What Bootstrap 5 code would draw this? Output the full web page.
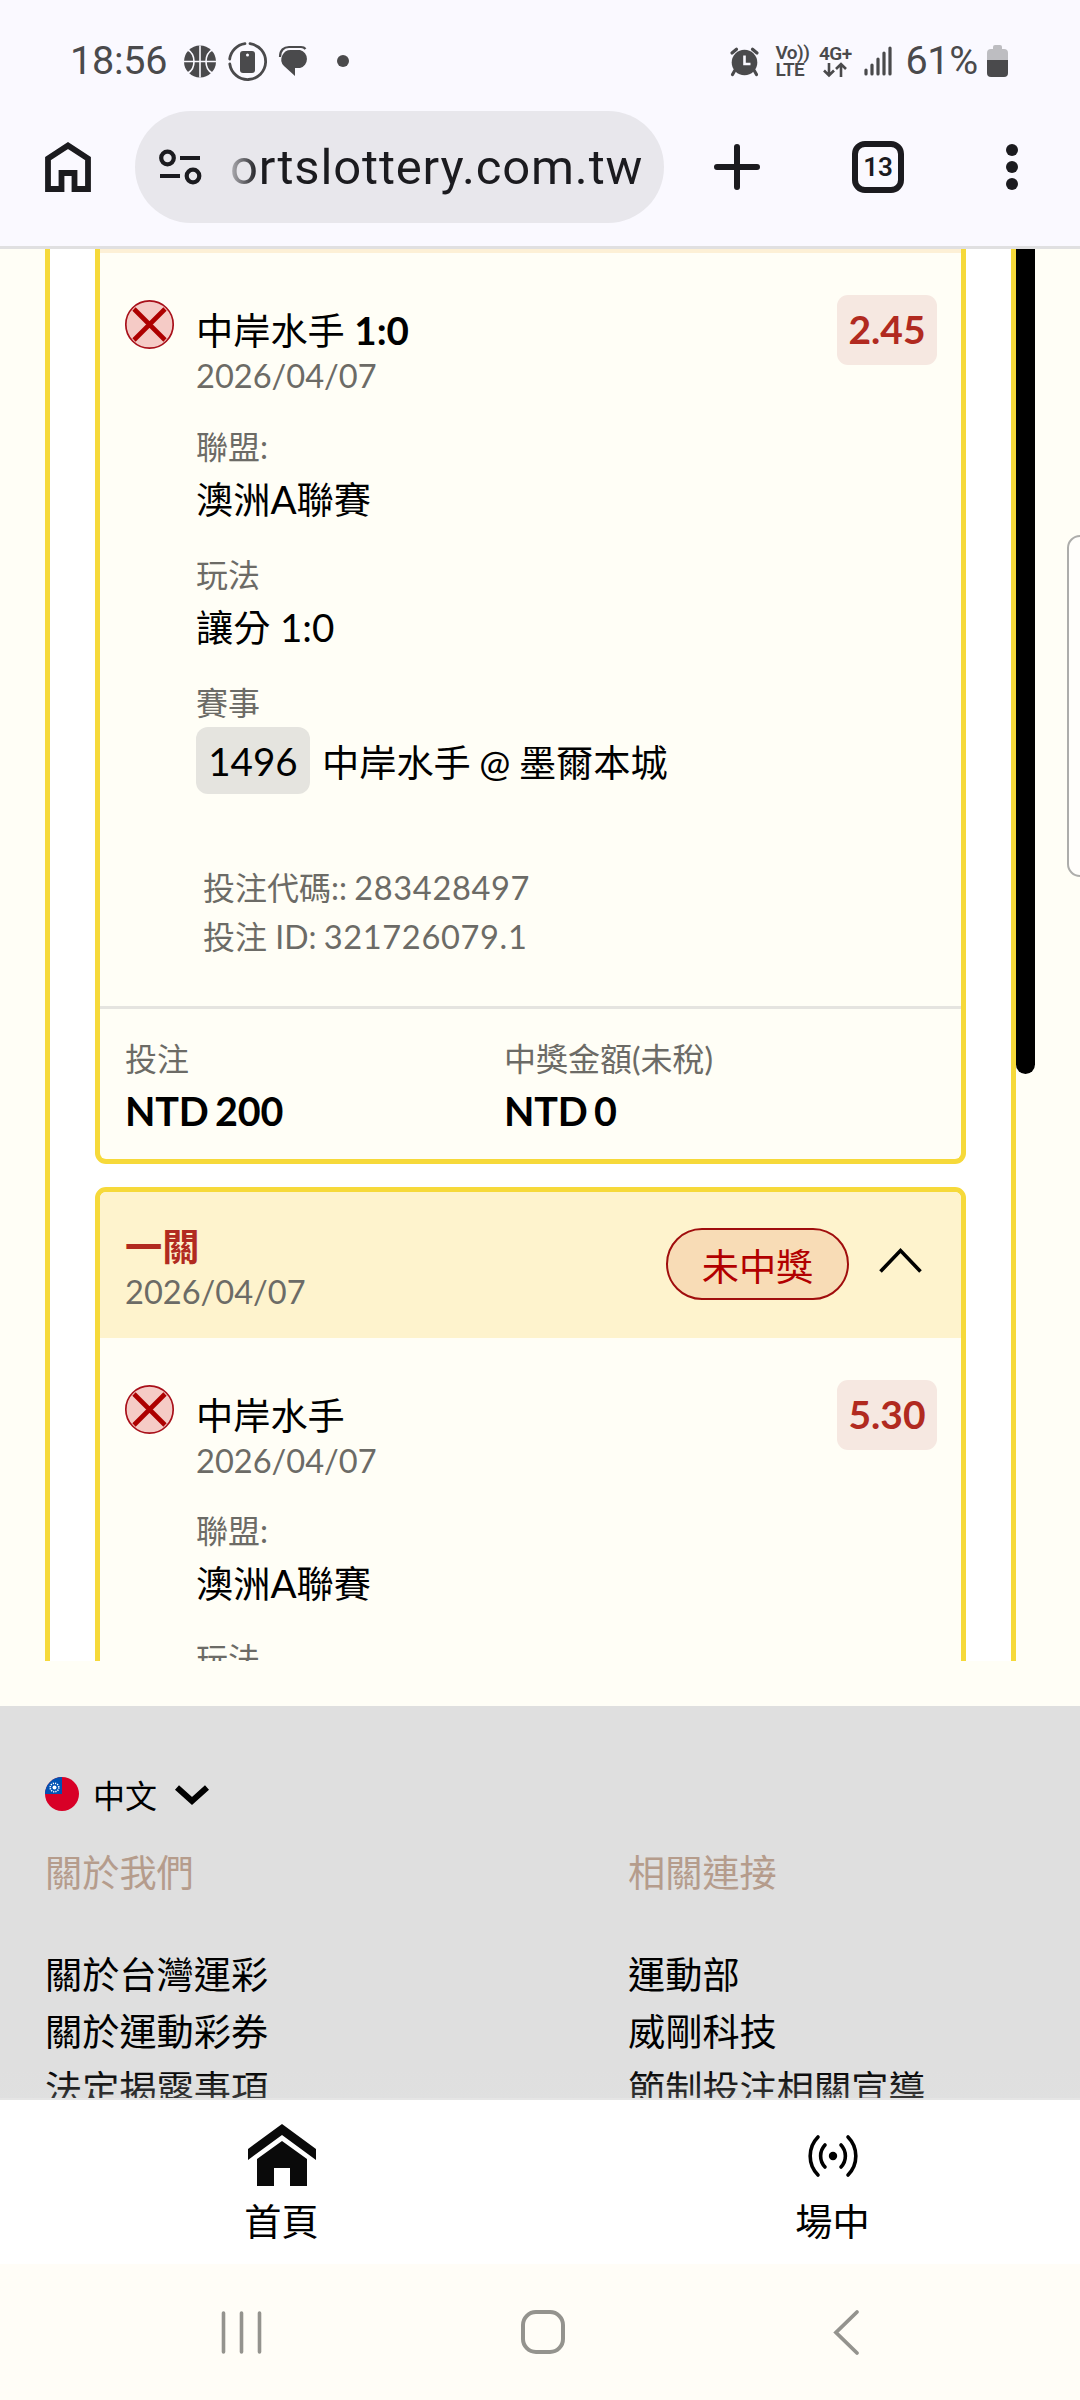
<!DOCTYPE html>
<html lang="zh-Hant">
<head>
<meta charset="utf-8">
<meta name="viewport" content="width=device-width, initial-scale=1">
<title>台灣運彩</title>
<link href="https://cdn.jsdelivr.net/npm/bootstrap@5.3.0/dist/css/bootstrap.min.css" rel="stylesheet">
<style>
  html, body { height: 2400px; }
  body { width: 1080px; margin: 0; overflow: hidden; background: #fffef6; color: #000;
         font-family: Lato, "Noto Sans CJK TC", sans-serif; }
  svg { display: block; flex: none; overflow: visible; }
  .screen { width: 1080px; height: 2400px; overflow: hidden; }
  .chrome { height: 249px; background: #faf9ff; border-bottom: 3px solid #e0e0e1; font-family: Roboto, sans-serif; }
  .status { height: 111px; padding: 11px 69px 0 70px; color: #4a4a4c; }
  .status-num { font-size: 39.5px; line-height: 40px; letter-spacing: -.2px; }
  .net-tag { font-size: 19px; line-height: 17px; font-weight: 600; letter-spacing: -.5px; white-space: nowrap; }
  .toolbar { height: 112px; color: #1b1b1f; padding-left: 45px; }
  .omnibox { width: 529px; height: 112px; background: #e8e7ec; margin-left: 44px; padding-left: 24px; }
  .url { font-size: 49px; line-height: 60px; letter-spacing: .85px; margin-left: 28px; padding-top: 2px; color: #1b1b1f;
         -webkit-mask-image: linear-gradient(90deg, rgba(0,0,0,.25) 0, #000 28px); mask-image: linear-gradient(90deg, rgba(0,0,0,.25) 0, #000 28px); }
  .tabs-box { width: 52px; height: 52px; border: 6px solid #1b1b1f; border-radius: 13px; font-size: 26px; font-weight: 600; line-height: 1; }
  .viewport-area { height: 1412px; padding-left: 45px; }
  .panel { width: 971px; background: #fff; border: solid #f6d93a; border-width: 0 5px; padding: 0 45px; }
  .thumb { width: 19px; height: 825px; background: #000; border-radius: 0 0 10px 10px; }
  .ticket { flex: none; border: 5px solid #f6d93a; border-radius: 11px; background: #fffef6; overflow: hidden; }
  .ticket-cut { border-top: 0; border-radius: 0 0 11px 11px; }
  .ticket + .ticket { margin-top: 23px; }
  .ticket-strip { height: 4px; background: #fdf0d6; }
  .ticket-head { height: 146px; background: #fef3cd; padding: 32px 39px 0 25px; }
  .t37 { font-size: 37.2px; line-height: 46px; white-space: nowrap; }
  .t32 { font-size: 32px; line-height: 40px; white-space: nowrap; }
  .latin { font-size: 38.6px; line-height: 1; }
  .amount { font-size: 39.5px; letter-spacing: -.2px; word-spacing: -3px; margin-top: 9px; }
  .dim { color: #6c6b66; }
  .date { font-size: 32.6px; margin-top: 2px; }
  .brick { color: #b12a20; }
  .pill { width: 183px; height: 72px; border: 2px solid #a00d0d; background: #f8dcb6; color: #b20000; padding-top: 6px; }
  .leg { padding: 55px 24px 0 25px; }
  .leg-icon { margin-top: -8px; }
  .leg-text { margin-left: 22px; }
  .odds { width: 100px; height: 70px; margin-top: -13px; border-radius: 11px; background: #f6e8e1; font-weight: 700; font-size: 39px; padding-bottom: 2px; }
  .field-a { margin-top: 31px; }
  .field-b { margin-top: 32px; }
  .gap-val { margin-top: 10px; }
  .code { width: 114px; height: 67px; border-radius: 12px; background: #e5e4df; margin-right: 12px; font-size: 38.6px; }
  .ids { margin: 74px 0 0 7px; padding-bottom: 49px; }
  .ids .latin { font-size: 32.6px; letter-spacing: .65px; margin-left: -1px; }
  .totals { border-top: 3px solid #e5e4e0; padding: 30px 25px 24px; height: 153px; }
  .footer-gap { height: 45px; background: #fffef6; }
  .site-footer { height: 394px; background: #dfdfdf; padding: 64px 45px 0; overflow: hidden; position: relative; }
  .foot-title { color: #b59c8c; }
  .foot-col { width: 583px; flex: none; }
  .foot-col .t37 { line-height: 57px; }
  .fade-edge { left: 0; right: 0; bottom: 0; height: 32px; background: linear-gradient(rgba(226,226,226,0), rgba(226,226,226,.25)); border-bottom: 2px solid #e5e5e5; }
  .tabbar { height: 164px; background: #fff; padding: 24px 0 0 6px; }
  .tab-item { width: 551px; flex: none; }
  .sysnav { height: 136px; background: #fffdf7; padding: 0 221px 0 221px; color: #94938e; }
  .edge-handle { position: absolute; left: 1067px; top: 535px; width: 26px; height: 342px; border: 2px solid #adadab; border-radius: 14px; background: #fffefb; }
</style>
</head>
<body>
<div class="screen d-flex flex-column position-relative">

  <header class="chrome flex-shrink-0">
    <div class="status d-flex align-items-center">
      <span class="status-num">18:56</span>
      <svg style="margin-left:17px" width="32" height="33" viewBox="0 0 32 32"><circle cx="16" cy="16" r="16" fill="currentColor"/><g fill="none" stroke="#faf9ff" stroke-width="1.600"><path d="M16 0v32M0 16h32M4 4.500C12 9 12 23 4 27.500M28 4.500C20 9 20 23 28 27.500"/></g></svg>
      <svg style="margin-left:12px" width="39" height="39" viewBox="0 0 39 39"><g fill="none" stroke="currentColor" stroke-width="2.800"><path d="M22 1.700A18 18 0 1 1 1.800 22" stroke-linecap="round"/><path d="M1.700 17A18 18 0 0 1 17 1.700" stroke-linecap="round"/></g><rect x="12" y="9" width="15" height="22" rx="3" fill="currentColor"/><circle cx="19.500" cy="13" r="1.500" fill="#faf9ff"/></svg>
      <svg style="margin-left:12px" width="31" height="30" viewBox="0 0 31 30"><path d="M1 11C1 4 5 1 10 1H22Q25 1 26.500 3" fill="none" stroke="currentColor" stroke-width="2.200"/><path d="M13 4H21A9.300 9.300 0 0 1 21 22H16V30L5 20A9.500 9.500 0 0 1 13 4Z" fill="currentColor"/></svg>
      <svg style="margin-left:27px" width="12" height="12" viewBox="0 0 12 12"><circle cx="6" cy="6" r="6" fill="currentColor"/></svg>

      <svg style="margin-left:381px" width="29" height="29" viewBox="0 0 29 29"><circle cx="14.500" cy="15.500" r="12.800" fill="currentColor"/><path d="M2 6L6.500 2.200M27 6L22.500 2.200M4.500 24L2.500 27.500M24.500 24L26.500 27.500" stroke="currentColor" stroke-width="3.200" stroke-linecap="round"/><path d="M14.500 8.500V17H20.500" fill="none" stroke="#faf9ff" stroke-width="2.600"/></svg>
      <div class="net-tag" style="margin-left:16px;width:33px"><div>Vo))</div><div>LTE</div></div>
      <div class="net-tag d-flex flex-column align-items-center" style="margin-left:10px;width:34px">4G+<svg width="24" height="14" viewBox="0 0 24 14" style="margin-top:1px"><path d="M6 0V12.500M1 7.500L6 12.500L11 7.500M18 14V1M13 6L18 1L23 6" fill="none" stroke="currentColor" stroke-width="2.600"/></svg></div>
      <svg style="margin-left:12px" width="28" height="30" viewBox="0 0 28 30"><path d="M2 24V28M8 19V28M14 13V28M20 7V28M26 2V28" stroke="currentColor" stroke-width="3.200" stroke-linecap="round"/></svg>
      <span class="status-num" style="margin-left:13px">61%</span>
      <svg style="margin-left:9px" width="21" height="32" viewBox="0 0 21 32"><path d="M6 2Q6 0 8 0H13Q15 0 15 2V4H17Q21 4 21 8V16H0V8Q0 4 4 4H6Z" fill="#bdbdc1"/><path d="M0 15H21V28Q21 32 17 32H4Q0 32 0 28Z" fill="currentColor"/></svg>
    </div>
    <div class="toolbar d-flex align-items-center">
      <svg width="46" height="50" viewBox="0 0 46 50"><path d="M3 47V16.500L23 3.500L43 16.500V47H29.500V31H16.500V47Z" fill="none" stroke="currentColor" stroke-width="5.800"/></svg>
      <div class="omnibox rounded-pill d-flex align-items-center">
        <svg width="43" height="36" viewBox="0 0 43 36"><g fill="none" stroke="currentColor" stroke-width="4.200"><circle cx="8.500" cy="9" r="6.300"/><circle cx="34" cy="27" r="6.300"/><path d="M21 9H41M1 27H21"/></g></svg>
        <span class="url">ortslottery.com.tw</span>
      </div>
      <svg style="margin-left:50px" width="46" height="46" viewBox="0 0 46 46"><path d="M23 3V43M3 23H43" stroke="currentColor" stroke-width="6" stroke-linecap="round"/></svg>
      <div class="tabs-box d-flex align-items-center justify-content-center" style="margin-left:92px">13</div>
      <svg style="margin-left:102px" width="12" height="46" viewBox="0 0 12 46"><g fill="currentColor"><circle cx="6" cy="6" r="6"/><circle cx="6" cy="23" r="6"/><circle cx="6" cy="40" r="6"/></g></svg>
    </div>
  </header>

  <main class="viewport-area flex-shrink-0 overflow-hidden d-flex align-items-start">
    <div class="panel d-flex flex-column">
      <article class="ticket ticket-cut">
        <div class="ticket-strip"></div>
        <div class="leg d-flex align-items-start">
          <svg class="leg-icon" width="49" height="49" viewBox="0 0 49 49"><circle cx="24.500" cy="24.500" r="23.700" fill="#f5cbc6" stroke="#a8101a" stroke-width="1.700"/><path d="M9 9L40 40M40 9L9 40" stroke="#ad0000" stroke-width="4.600"/></svg>
          <div class="leg-text flex-grow-1">
            <div class="t37">中岸水手 <b class="latin">1:0</b></div>
            <div class="t32 date dim">2026/04/07</div>
            <div class="t32 dim field-a">聯盟:</div>
            <div class="t37 gap-val">澳洲<span class="latin">A</span>聯賽</div>
            <div class="t32 dim field-b">玩法</div>
            <div class="t37 gap-val">讓分 <span class="latin">1:0</span></div>
            <div class="t32 dim field-b">賽事</div>
            <div class="d-flex align-items-center" style="margin-top:4px">
              <span class="code t37 d-flex align-items-center justify-content-center">1496</span>
              <span class="t37 pt-1" style="word-spacing:-1px">中岸水手 @ 墨爾本城</span>
            </div>
            <div class="ids dim">
              <div class="t32">投注代碼:: <span class="latin">283428497</span></div>
              <div class="t32" style="margin-top:9px">投注 ID: <span class="latin">321726079.1</span></div>
            </div>
          </div>
          <span class="odds brick d-flex align-items-center justify-content-center flex-shrink-0">2.45</span>
        </div>
        <div class="totals d-flex">
          <div style="width:379px"><div class="t32 dim">投注</div><div class="t37 fw-bold amount">NTD 200</div></div>
          <div><div class="t32 dim">中獎金額(未稅)</div><div class="t37 fw-bold amount">NTD 0</div></div>
        </div>
      </article>

      <article class="ticket">
        <div class="ticket-head d-flex align-items-start">
          <div>
            <div class="t37 fw-bold brick">一關</div>
            <div class="t32 date dim">2026/04/07</div>
          </div>
          <span class="pill t37 rounded-pill d-flex align-items-center justify-content-center ms-auto" style="margin-top:4px">未中獎</span>
          <svg style="margin:24px 0 0 30px" width="43" height="25" viewBox="0 0 43 25"><path d="M1.500 23.500L21.500 2.500L41.500 23.500" fill="none" stroke="#000" stroke-width="3.600"/></svg>
        </div>
        <div class="leg d-flex align-items-start">
          <svg class="leg-icon" width="49" height="49" viewBox="0 0 49 49"><circle cx="24.500" cy="24.500" r="23.700" fill="#f5cbc6" stroke="#a8101a" stroke-width="1.700"/><path d="M9 9L40 40M40 9L9 40" stroke="#ad0000" stroke-width="4.600"/></svg>
          <div class="leg-text flex-grow-1">
            <div class="t37">中岸水手</div>
            <div class="t32 date dim">2026/04/07</div>
            <div class="t32 dim" style="margin-top:30px">聯盟:</div>
            <div class="t37 gap-val">澳洲<span class="latin">A</span>聯賽</div>
            <div class="t32 dim field-b">玩法</div>
          </div>
          <span class="odds brick d-flex align-items-center justify-content-center flex-shrink-0">5.30</span>
        </div>
        <div style="height:100px"></div>
      </article>
    </div>
    <div class="thumb"></div>
  </main>
  <div class="footer-gap flex-shrink-0"></div>

  <footer class="site-footer flex-shrink-0">
    <div class="d-flex align-items-center" style="height:48px">
      <svg width="34" height="34" viewBox="0 0 34 34"><defs><clipPath id="disc"><circle cx="17" cy="17" r="17"/></clipPath></defs><g clip-path="url(#disc)"><rect width="34" height="34" fill="#d80027"/><rect width="17" height="17" fill="#0052b4"/><circle cx="9.500" cy="10.500" r="4.300" fill="none" stroke="#fff" stroke-width="1.600" stroke-dasharray="1.200 1.050"/><circle cx="9.500" cy="10.500" r="2" fill="#fff"/></g></svg>
      <span class="t32" style="margin-left:14px;padding-top:3px">中文</span>
      <svg style="margin-left:18px" width="34" height="19" viewBox="0 0 34 19"><path d="M2 2.500L17 16L32 2.500" fill="none" stroke="#000" stroke-width="6"/></svg>
    </div>
    <div class="d-flex" style="margin-top:26px">
      <div class="foot-col">
        <div class="t37 foot-title">關於我們</div>
        <div style="margin-top:45px">
          <div class="t37">關於台灣運彩</div><div class="t37">關於運動彩券</div><div class="t37">法定揭露事項</div>
        </div>
      </div>
      <div class="foot-col">
        <div class="t37 foot-title">相關連接</div>
        <div style="margin-top:45px">
          <div class="t37">運動部</div><div class="t37">威剛科技</div><div class="t37">節制投注相關宣導</div>
        </div>
      </div>
    </div>
    <div class="fade-edge position-absolute"></div>
  </footer>

  <nav class="tabbar flex-shrink-0 d-flex">
    <div class="tab-item d-flex flex-column align-items-center">
      <svg width="68" height="62" viewBox="0 0 68 62"><path d="M34 0L68 25V36L34 11L0 36V25Z" fill="#0a0a0a"/><path d="M34 17L59 35V62H42V44H26V62H9V35Z" fill="#0a0a0a"/></svg>
      <div class="t37" style="margin-top:13px">首頁</div>
    </div>
    <div class="tab-item d-flex flex-column align-items-center">
      <svg style="margin-top:11px" width="52" height="42" viewBox="0 0 52 42"><g fill="none" stroke="#000" stroke-width="3.600" stroke-linecap="round"><path d="M11 2A27 27 0 0 0 11 40M41 2A27 27 0 0 1 41 40M18 10A16 16 0 0 0 18 32M34 10A16 16 0 0 1 34 32"/></g><circle cx="26" cy="21" r="4.200"/></svg>
      <div class="t37" style="margin-top:22px">場中</div>
    </div>
  </nav>
  <div class="sysnav flex-shrink-0 d-flex align-items-center justify-content-between">
    <svg width="41" height="43" viewBox="0 0 41 43"><path d="M2.500 2V41M20.500 2V41M38.500 2V41" stroke="currentColor" stroke-width="3.600" stroke-linecap="round"/></svg>
    <svg width="44" height="44" viewBox="0 0 44 44" style="margin-right:10px"><rect x="2" y="2" width="40" height="40" rx="13" fill="none" stroke="currentColor" stroke-width="4"/></svg>
    <svg width="26" height="45" viewBox="0 0 26 45"><path d="M24 2L3 22.500L24 43" fill="none" stroke="currentColor" stroke-width="3.800" stroke-linecap="round"/></svg>
  </div>

  <div class="edge-handle"></div>
</div>
<script src="https://cdn.jsdelivr.net/npm/bootstrap@5.3.0/dist/js/bootstrap.bundle.min.js"></script>
</body>
</html>
